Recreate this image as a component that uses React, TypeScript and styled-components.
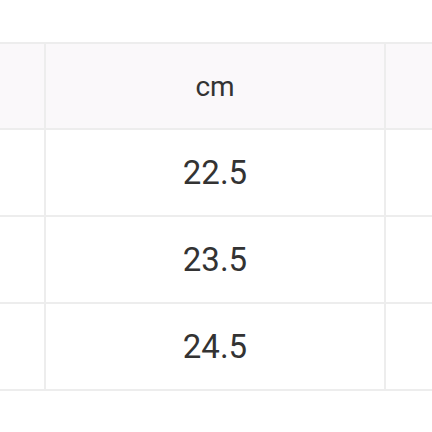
import styled, { createGlobalStyle } from "styled-components";

const GlobalStyle = createGlobalStyle`
  html, body {
    margin: 0;
    padding: 0;
    background: #ffffff;
  }
  body {
    font-family: Roboto, "Noto Sans", "Liberation Sans", sans-serif;
    color: #333333;
  }
`;

const sizes = ["22.5", "23.5", "24.5"];

export default function App() {
  return (
    <>
      <GlobalStyle />
      <Page>
        <SizeTable>
          <colgroup>
            <col style={{ width: 44 }} />
            <col style={{ width: 340 }} />
            <col />
          </colgroup>
          <thead>
            <tr>
              <HeadCell />
              <HeadCell $divider>cm</HeadCell>
              <HeadCell $divider />
            </tr>
          </thead>
          <tbody>
            {sizes.map((size) => (
              <tr key={size}>
                <Cell />
                <Cell $divider>{size}</Cell>
                <Cell $divider />
              </tr>
            ))}
          </tbody>
        </SizeTable>
      </Page>
    </>
  );
}

const Page = styled.div`
  padding-top: 42px;
  width: 432px;
  overflow: hidden;
`;

const SizeTable = styled.table`
  width: 432px;
  table-layout: fixed;
  border-collapse: separate;
  border-spacing: 0;
`;

const HeadCell = styled.th<{ $divider?: boolean }>`
  height: 84px;
  padding: 0;
  background: #faf8fa;
  border-top: 2px solid #ededed;
  border-bottom: 2px solid #ededed;
  border-left: ${(p) => (p.$divider ? "2px solid #ededed" : "none")};
  font-size: 28px;
  font-weight: 400;
  text-align: center;
  vertical-align: middle;
`;

const Cell = styled.td<{ $divider?: boolean }>`
  height: 85px;
  padding: 0;
  border-bottom: 2px solid #ededed;
  border-left: ${(p) => (p.$divider ? "2px solid #ededed" : "none")};
  font-size: 33px;
  text-align: center;
  vertical-align: middle;
`;
